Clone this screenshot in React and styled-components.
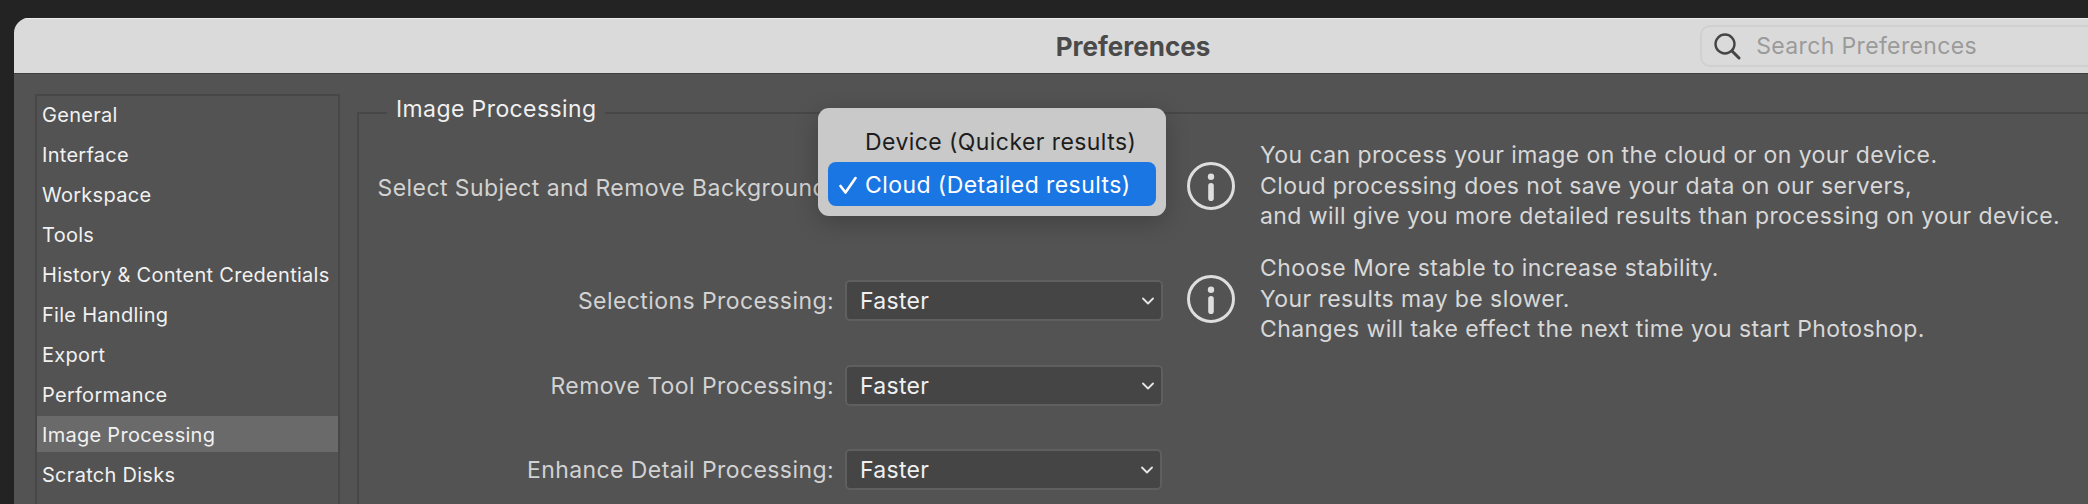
import styled, { createGlobalStyle } from 'styled-components';

const GlobalStyle = createGlobalStyle`
    html, body {
        margin: 0;
        height: 504px;
        overflow: hidden;
        background: #232323;
        font-family: "Inter", "Liberation Sans", sans-serif;
    }
`;

const Page = styled.div`
    width: 2088px;
    height: 504px;
    padding: 18px 0 0 14px;
    box-sizing: border-box;
    overflow: hidden;
    background: #232323;
`;

const Window = styled.div`
    width: 2238px;
    height: 486px;
    border-radius: 15px 15px 0 0;
    overflow: hidden;
    background: #535353;
`;

const TitleBar = styled.header`
    display: grid;
    grid-template-columns: minmax(0, 1fr) auto minmax(0, 1fr);
    align-items: center;
    height: 56px;
    box-sizing: border-box;
    background: #dadada;
    border-top: 1px solid #eeeeee;
    border-bottom: 1px solid #3f3f3f;
`;

const Title = styled.h1`
    grid-column: 2;
    margin: 0;
    font-size: 26px;
    font-weight: 700;
    color: #4a4a4a;
`;

const SearchBox = styled.div`
    grid-column: 3;
    display: flex;
    align-items: center;
    gap: 15px;
    margin-left: 490px;
    width: 600px;
    height: 42px;
    padding-left: 11px;
    box-sizing: border-box;
    border: 2px solid #d0d0d0;
    border-radius: 10px;
    font-size: 23px;
    letter-spacing: 0.35px;
    color: #9a9a9a;
`;

const Body = styled.div`
    display: flex;
    gap: 18px;
    padding: 20px 0 0 21px;
`;

const Sidebar = styled.ul`
    flex: none;
    width: 305px;
    height: 420px;
    margin: 0;
    padding: 0;
    box-sizing: border-box;
    border: 2px solid #474747;
    list-style: none;
`;

const SideItem = styled.li`
    display: flex;
    align-items: center;
    height: 36px;
    margin-bottom: 4px;
    padding: 2px 0 0 5px;
    box-sizing: border-box;
    font-size: 20px;
    letter-spacing: 0.28px;
    color: #f1f1f1;
    background: ${props => props.$active ? '#6a6a6a' : 'transparent'};
`;

const Group = styled.fieldset`
    flex: 1;
    min-width: 0;
    height: 440px;
    margin: 1px 0 0 -1px;
    padding: 0;
    box-sizing: border-box;
    border: 2px solid #474747;
    border-width: 2px 0 0 2px;
`;

const GroupTitle = styled.legend`
    margin-left: 28px;
    padding: 0 9px 8px;
    font-size: 23px;
    letter-spacing: 0.4px;
    color: #f0f0f0;
`;

const Rows = styled.div`
    display: flex;
    flex-direction: column;
    padding: 9px 0 0 1px;
`;

const Row = styled.div`
    display: grid;
    grid-template-columns: 485px 318px 48px 1fr;
    align-items: center;
    height: ${props => props.$height}px;
    margin-top: ${props => props.$gap}px;
`;

const Label = styled.label`
    justify-self: end;
    margin-right: 11px;
    white-space: nowrap;
    font-size: 23px;
    letter-spacing: 0.42px;
    color: #d2d2d2;
`;

const SelectWrap = styled.div`
    position: relative;
    grid-column: 2;
    margin-right: ${props => props.$narrow ? 1 : 0}px;
`;

const Select = styled.div`
    display: flex;
    align-items: center;
    justify-content: space-between;
    height: 41px;
    padding: 0 7px 0 13px;
    box-sizing: border-box;
    border: 2px solid #5f5f5f;
    border-radius: 5px;
    background: #454545;
    font-size: 23px;
    letter-spacing: 0.3px;
    color: #f0f0f0;
`;

const Popup = styled.ul`
    position: absolute;
    top: -59px;
    left: -27px;
    width: 348px;
    height: 108px;
    margin: 0;
    padding: 14px 10px 0;
    box-sizing: border-box;
    list-style: none;
    border-radius: 11px;
    background: #c9c9c9;
    box-shadow: 0 6px 24px rgba(0, 0, 0, 0.22);
`;

const PopupItem = styled.li`
    display: flex;
    align-items: center;
    height: ${props => props.$selected ? 44 : 40}px;
    padding: ${props => props.$selected ? 2 : 0}px 0 0 37px;
    box-sizing: border-box;
    position: relative;
    border-radius: 8px;
    font-size: 23px;
    letter-spacing: 0.42px;
    color: ${props => props.$selected ? '#ffffff' : '#1d1d1d'};
    background: ${props => props.$selected ? '#1a76e3' : 'transparent'};
`;

const CheckMark = styled.svg`
    position: absolute;
    left: 11px;
    top: 14px;
`;

const InfoWrap = styled.div`
    grid-column: 3;
    display: flex;
    margin: 0 0 4px 24px;
    width: 48px;
    height: 48px;
`;

const Notes = styled.div`
    grid-column: 4;
    margin: 0 0 4px 49px;
    font-size: 23px;
    letter-spacing: 0.42px;
    line-height: 30.5px;
    white-space: nowrap;
    color: #d8d8d8;
`;

const sections = [
    'General', 'Interface', 'Workspace', 'Tools', 'History & Content Credentials',
    'File Handling', 'Export', 'Performance', 'Image Processing', 'Scratch Disks',
];

function SearchIcon() {
    return (
        <svg width="28" height="28" viewBox="0 0 28 28" fill="none" stroke="#454545" strokeWidth="2.4" strokeLinecap="round">
            <circle cx="12" cy="12" r="9.5" />
            <path d="M19 19l7 7" strokeWidth="3" />
        </svg>
    );
}

function InfoIcon() {
    return (
        <svg width="48" height="48" viewBox="0 0 48 48" fill="none">
            <circle cx="24" cy="24" r="22.5" stroke="#dedede" strokeWidth="3" />
            <circle cx="24" cy="14.7" r="3.2" fill="#dedede" />
            <rect x="21.2" y="21" width="5.6" height="18" rx="2.8" fill="#dedede" />
        </svg>
    );
}

function Chevron() {
    return (
        <svg width="12" height="8" viewBox="0 0 12 8" fill="none" stroke="#e6e6e6" strokeWidth="1.8" strokeLinecap="round" strokeLinejoin="round">
            <path d="M1 1.5l5 5 5-5" />
        </svg>
    );
}

function FasterSelect({ narrow }) {
    return (
        <SelectWrap $narrow={narrow}>
            <Select>
                Faster
                <Chevron />
            </Select>
        </SelectWrap>
    );
}

export default function App() {
    return (
        <Page>
            <GlobalStyle />
            <Window>
                <TitleBar>
                    <Title>Preferences</Title>
                    <SearchBox>
                        <SearchIcon />
                        Search Preferences
                    </SearchBox>
                </TitleBar>
                <Body>
                    <Sidebar>
                        {sections.map(name => (
                            <SideItem key={name} $active={name === 'Image Processing'}>{name}</SideItem>
                        ))}
                    </Sidebar>
                    <Group>
                        <GroupTitle>Image Processing</GroupTitle>
                        <Rows>
                            <Row $height={92} $gap={0}>
                                <Label>Select Subject and Remove Background:</Label>
                                <SelectWrap>
                                    <Select>Cloud (Detailed results)</Select>
                                    <Popup>
                                        <PopupItem>Device (Quicker results)</PopupItem>
                                        <PopupItem $selected>
                                            <CheckMark width="18" height="18" viewBox="0 0 18 18" fill="none" stroke="#ffffff" strokeWidth="2.6" strokeLinecap="round" strokeLinejoin="round">
                                                <path d="M1.5 10l5 6.5L16.5 2" />
                                            </CheckMark>
                                            Cloud (Detailed results)
                                        </PopupItem>
                                    </Popup>
                                </SelectWrap>
                                <InfoWrap><InfoIcon /></InfoWrap>
                                <Notes>
                                    You can process your image on the cloud or on your device.<br />
                                    Cloud processing does not save your data on our servers,<br />
                                    and will give you more detailed results than processing on your device.
                                </Notes>
                            </Row>
                            <Row $height={92} $gap={21}>
                                <Label>Selections Processing:</Label>
                                <FasterSelect />
                                <InfoWrap><InfoIcon /></InfoWrap>
                                <Notes>
                                    Choose More stable to increase stability.<br />
                                    Your results may be slower.<br />
                                    Changes will take effect the next time you start Photoshop.
                                </Notes>
                            </Row>
                            <Row $height={41} $gap={20}>
                                <Label>Remove Tool Processing:</Label>
                                <FasterSelect />
                            </Row>
                            <Row $height={41} $gap={43}>
                                <Label>Enhance Detail Processing:</Label>
                                <FasterSelect narrow />
                            </Row>
                        </Rows>
                    </Group>
                </Body>
            </Window>
        </Page>
    );
}
